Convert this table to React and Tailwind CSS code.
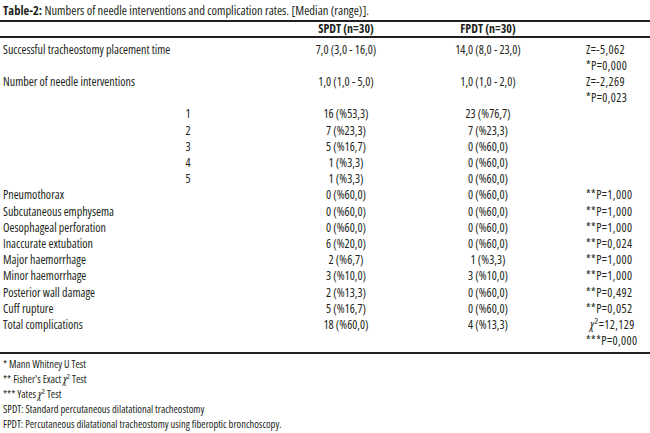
const rows = [
  { label: "Successful tracheostomy placement time", a: "7,0 (3,0 - 16,0)", b: "14,0 (8,0 - 23,0)", p: ["Z=-5,062", "*P=0,000"] },
  { label: "Number of needle interventions", a: "1,0 (1,0 - 5,0)", b: "1,0 (1,0 - 2,0)", p: ["Z=-2,269", "*P=0,023"] },
  { sub: "1", a: "16 (%53,3)", b: "23 (%76,7)" },
  { sub: "2", a: "7 (%23,3)", b: "7 (%23,3)" },
  { sub: "3", a: "5 (%16,7)", b: "0 (%60,0)" },
  { sub: "4", a: "1 (%3,3)", b: "0 (%60,0)" },
  { sub: "5", a: "1 (%3,3)", b: "0 (%60,0)" },
  { label: "Pneumothorax", a: "0 (%60,0)", b: "0 (%60,0)", p: ["**P=1,000"] },
  { label: "Subcutaneous emphysema", a: "0 (%60,0)", b: "0 (%60,0)", p: ["**P=1,000"] },
  { label: "Oesophageal perforation", a: "0 (%60,0)", b: "0 (%60,0)", p: ["**P=1,000"] },
  { label: "Inaccurate extubation", a: "6 (%20,0)", b: "0 (%60,0)", p: ["**P=0,024"] },
  { label: "Major haemorrhage", a: "2 (%6,7)", b: "1 (%3,3)", p: ["**P=1,000"] },
  { label: "Minor haemorrhage", a: "3 (%10,0)", b: "3 (%10,0)", p: ["**P=1,000"] },
  { label: "Posterior wall damage", a: "2 (%13,3)", b: "0 (%60,0)", p: ["**P=0,492"] },
  { label: "Cuff rupture", a: "5 (%16,7)", b: "0 (%60,0)", p: ["**P=0,052"] },
  { label: "Total complications", a: "18 (%60,0)", b: "4 (%13,3)", chi: true, p: ["***P=0,000"] },
];

function Chi() {
  return (
    <span>
      <span className="italic">χ</span>²
    </span>
  );
}

export default function App() {
  return (
    <div className="w-[650px] h-[433px] bg-white text-[#231f20] overflow-hidden font-['Open_Sans',sans-serif] font-stretch-condensed">
      {/* title */}
      <div className="h-[20px] pl-[3px] pt-[3px] text-[12.5px] leading-[16px]">
        <span className="font-bold">Table-2:</span> Numbers of needle interventions and complication rates. [Median (range)].
      </div>
      <div className="h-[2px] bg-[#231f20]" />

      {/* header */}
      <div className="grid grid-cols-[290px_112px_172px_1fr] h-[14px] text-[12px] leading-[13px] font-bold">
        <div />
        <div className="text-center">SPDT (n=30)</div>
        <div className="text-center">FPDT (n=30)</div>
        <div />
      </div>
      <div className="h-[1.5px] bg-[#231f20]" />

      {/* body */}
      <div className="pt-[4px] pb-[3px] text-[12px] leading-[16.2px]">
        {rows.map((r, i) => (
          <div key={i} className="grid grid-cols-[290px_112px_172px_1fr]">
            <div className="pl-[3px]">
              {r.sub ? <span className="inline-block w-[20px] ml-[175px] text-center">{r.sub}</span> : r.label}
            </div>
            <div className="text-center">{r.a}</div>
            <div className="text-center">{r.b}</div>
            <div className="pl-[12px] tracking-[0.4px]">
              {r.chi && (
                <div className="pl-[4px]">
                  <Chi />=12,129
                </div>
              )}
              {r.p && r.p.map((t) => <div key={t}>{t}</div>)}
            </div>
          </div>
        ))}
      </div>
      <div className="h-[2px] bg-[#231f20]" />

      {/* footnotes */}
      <div className="pl-[3px] pt-[3px] text-[10.5px] leading-[14.8px]">
        <div>* Mann Whitney U Test</div>
        <div>** Fisher's Exact <Chi /> Test</div>
        <div>*** Yates <Chi /> Test</div>
        <div>SPDT: Standard percutaneous dilatational tracheostomy</div>
        <div>FPDT: Percutaneous dilatational tracheostomy using fiberoptic bronchoscopy.</div>
      </div>
    </div>
  );
}
